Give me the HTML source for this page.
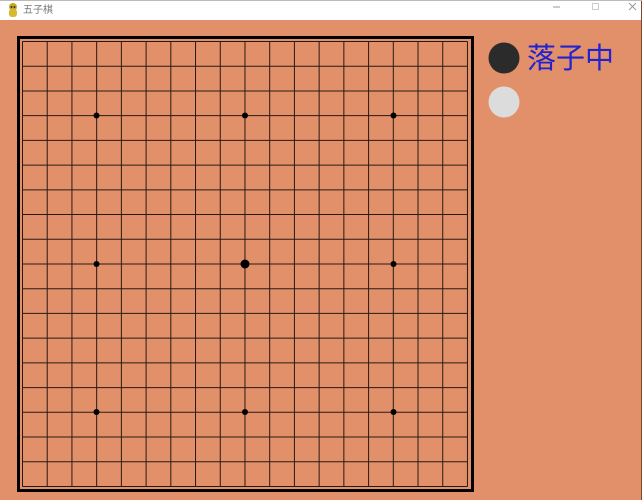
<!DOCTYPE html>
<html><head><meta charset="utf-8"><style>
html,body{margin:0;padding:0;width:642px;height:500px;overflow:hidden;background:#e1906a;}
</style></head><body>
<svg width="642" height="500" xmlns="http://www.w3.org/2000/svg" style="display:block">
<rect x="0" y="0" width="642" height="500" fill="#e1906a"/>
<rect x="0" y="0" width="642" height="20" fill="#ffffff"/>
<line x1="641.5" y1="0" x2="641.5" y2="500" stroke="#7a4a30" stroke-width="1"/>
<line x1="0" y1="0.5" x2="642" y2="0.5" stroke="#bbb" stroke-width="1"/>
<g>
<circle cx="13" cy="7" r="4" fill="#c8a820"/>
<rect x="9" y="9" width="8" height="8" rx="3" fill="#d8b830"/>
<circle cx="11.5" cy="7" r="1" fill="#333"/><circle cx="14.5" cy="7" r="1" fill="#333"/>
</g>
<text x="23" y="13" font-family="'Liberation Sans','Noto Sans CJK SC',sans-serif" font-size="10" fill="#777">五子棋</text>
<line x1="553" y1="7" x2="560" y2="7" stroke="#999" stroke-width="1"/>
<rect x="592.5" y="3.5" width="6" height="6" fill="none" stroke="#ccc"/>
<path d="M629 3 L636 10 M636 3 L629 10" stroke="#999" stroke-width="1"/>
<rect x="18.5" y="37.5" width="454" height="453" fill="none" stroke="#000" stroke-width="3"/>
<g stroke="#2a1a10" stroke-width="1" id="g"></g>
<g fill="#000">
<circle cx="96.5" cy="115.5" r="3"/><circle cx="245" cy="115.5" r="3"/><circle cx="393.5" cy="115.5" r="3"/>
<circle cx="96.5" cy="264" r="3"/><circle cx="245" cy="264" r="4.5"/><circle cx="393.5" cy="264" r="3"/>
<circle cx="96.5" cy="412" r="3"/><circle cx="245" cy="412" r="3"/><circle cx="393.5" cy="412" r="3"/>
</g>
<circle cx="504" cy="58" r="15.5" fill="#2b2b2b"/>
<circle cx="504" cy="102" r="15.5" fill="#dcdcdc"/>
<text x="527" y="68" font-family="'Liberation Sans','Noto Sans CJK SC',sans-serif" font-size="29" fill="#2222d0">落子中</text>
</svg>
<script>
var g=document.getElementById('g'),ns='http://www.w3.org/2000/svg';
for(var i=0;i<19;i++){var x=22.5+i*24.72,y=41.5+i*24.72;
var a=document.createElementNS(ns,'line');a.setAttribute('x1',x);a.setAttribute('x2',x);a.setAttribute('y1',41.5);a.setAttribute('y2',486.5);g.appendChild(a);
var b=document.createElementNS(ns,'line');b.setAttribute('y1',y);b.setAttribute('y2',y);b.setAttribute('x1',22.5);b.setAttribute('x2',467.5);g.appendChild(b);}
</script>
</body></html>
